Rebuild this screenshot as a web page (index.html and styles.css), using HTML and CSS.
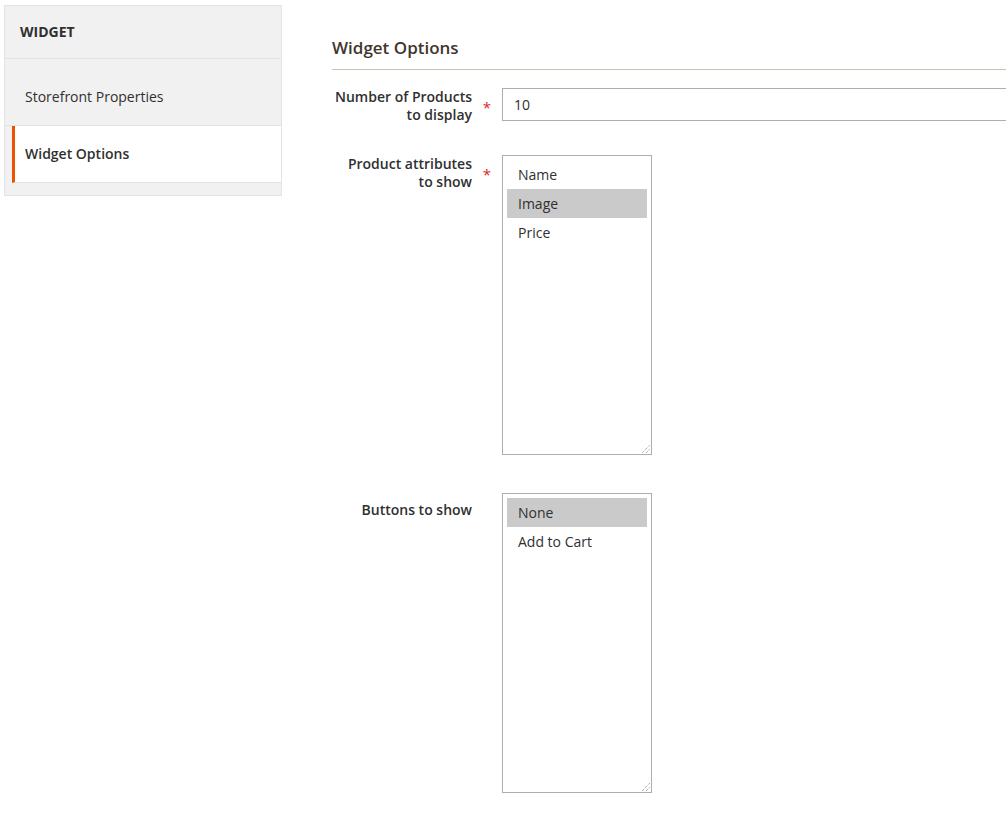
FILE: index.html
```html
<!DOCTYPE html>
<html lang="en">

<head>
    <meta charset="UTF-8">
    <meta name="viewport" content="width=device-width, initial-scale=1.0">
    <title>Widget Options</title>
    <link rel="stylesheet" href="styles.css">
</head>

<body>
    <div class="page">
        <aside class="side-nav">
            <div class="side-nav-title">WIDGET</div>
            <ul class="side-nav-items">
                <li class="side-nav-item">Storefront Properties</li>
                <li class="side-nav-item active">Widget Options</li>
            </ul>
        </aside>

        <main class="content">
            <h2 class="section-title">Widget Options</h2>
            <form class="fieldset">
                <div class="field">
                    <label class="field-label">Number of Products<br>to display</label>
                    <span class="required">*</span>
                    <div class="field-control">
                        <input type="text" class="text-input" value="10">
                    </div>
                </div>

                <div class="field">
                    <label class="field-label">Product attributes<br>to show</label>
                    <span class="required">*</span>
                    <div class="field-control">
                        <div class="multiselect">
                            <div class="option">Name</div>
                            <div class="option selected">Image</div>
                            <div class="option">Price</div>
                            <svg class="grip" width="9" height="9" viewBox="0 0 9 9">
                                <line x1="1" y1="9" x2="9" y2="1" stroke="#8a8a8a" stroke-dasharray="1 1" />
                                <line x1="5" y1="9" x2="9" y2="5" stroke="#8a8a8a" stroke-dasharray="1 1" />
                            </svg>
                        </div>
                    </div>
                </div>

                <div class="field field-last">
                    <label class="field-label single">Buttons to show</label>
                    <span class="required"></span>
                    <div class="field-control">
                        <div class="multiselect">
                            <div class="option selected">None</div>
                            <div class="option">Add to Cart</div>
                            <svg class="grip" width="9" height="9" viewBox="0 0 9 9">
                                <line x1="1" y1="9" x2="9" y2="1" stroke="#8a8a8a" stroke-dasharray="1 1" />
                                <line x1="5" y1="9" x2="9" y2="5" stroke="#8a8a8a" stroke-dasharray="1 1" />
                            </svg>
                        </div>
                    </div>
                </div>
            </form>
        </main>
    </div>
</body>
</html>
```

FILE: styles.css
```css
html {
    overflow: hidden;
}

body {
    font-family: 'Open Sans', 'Liberation Sans', sans-serif;
    font-size: 14px;
    color: #303030;
    margin: 0;
    padding: 0;
    background-color: #ffffff;
}

.page {
    display: flex;
    align-items: flex-start;
    padding: 5px 0 0 4px;
}

/* left tabs */
.side-nav {
    width: 278px;
    flex-shrink: 0;
    box-sizing: border-box;
    background-color: #f1f1f1;
    border: 1px solid #e3e3e3;
}

.side-nav-title {
    padding: 16px 15px;
    line-height: 20px;
    font-weight: 700;
    color: #303030;
    border-bottom: 1px solid #e3e3e3;
}

.side-nav-items {
    list-style: none;
    margin: 0;
    padding: 10px 0 12px;
}

.side-nav-item {
    padding: 18px 20px;
    line-height: 20px;
    border-bottom: 1px solid #e3e3e3;
    color: #303030;
}

.side-nav-item.active {
    margin-left: 7px;
    padding-left: 10px;
    border-left: 3px solid #eb5202;
    background-color: #ffffff;
    font-weight: 600;
}

/* right form */
.content {
    flex: 1;
    min-width: 0;
    margin-left: 50px;
}

.section-title {
    margin: 31px 0 0;
    padding-bottom: 9px;
    font-size: 17px;
    line-height: 24px;
    font-weight: 600;
    color: #41362f;
    border-bottom: 1px solid #cac3b4;
}

.fieldset {
    margin-top: 18px;
    display: flex;
    flex-direction: column;
    gap: 31px;
}

.field {
    display: grid;
    grid-template-columns: 140px 30px 1fr;
    align-items: start;
}

.field-last {
    margin-top: 7px;
}

.field-label {
    text-align: right;
    font-weight: 600;
    line-height: 18px;
    color: #303030;
}

.field-label.single {
    padding-top: 8px;
}

.required {
    text-align: center;
    color: #e22626;
    font-size: 15px;
    line-height: 18px;
    padding-top: 10px;
}

.text-input {
    display: block;
    width: 520px;
    height: 33px;
    box-sizing: border-box;
    padding: 0 11px;
    border: 1px solid #adadad;
    border-radius: 0;
    font-family: inherit;
    font-size: 14px;
    color: #303030;
}

.multiselect {
    position: relative;
    width: 150px;
    height: 300px;
    box-sizing: border-box;
    padding: 4px;
    border: 1px solid #adadad;
    background-color: #ffffff;
}

.option {
    padding: 5px 11px;
    line-height: 19px;
    color: #303030;
}

.option.selected {
    background-color: #cacaca;
}

.grip {
    position: absolute;
    right: 1px;
    bottom: 1px;
}
```
